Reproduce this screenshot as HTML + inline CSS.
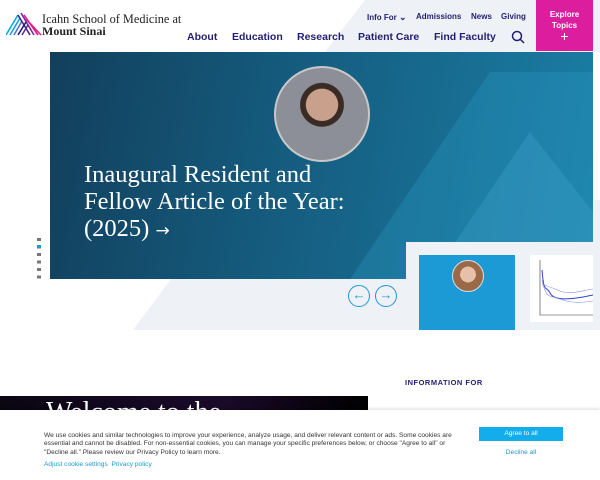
<!DOCTYPE html>
<html><head><meta charset="utf-8"><style>
*{margin:0;padding:0;box-sizing:border-box}
body{width:600px;height:480px;overflow:hidden;background:#fff;font-family:"Liberation Sans",sans-serif;position:relative}
.a{position:absolute}
.nav{color:#221f72;font-weight:bold;font-size:10.5px}
.top{color:#221f72;font-size:8px;font-weight:bold}
</style></head><body>
<svg class="a" style="left:0;top:0" width="600" height="340">
<polygon points="365,0 600,0 600,52 325,52" fill="#eef1f5"/>
<polygon points="133,330 600,330 600,200 230,200" fill="#eef1f5"/>
</svg>
<svg class="a" style="left:6;top:12" width="36" height="24" viewBox="0 0 36 24">
<g stroke-width="1.6" fill="none">
<path d="M0,23 L12,3" stroke="#06a9e0"/><path d="M4,23 L14,6" stroke="#1aa0e0"/><path d="M8,23 L16,9" stroke="#5a70d0"/>
<path d="M12,3 L24,23" stroke="#3b2c8a"/><path d="M15,1 L28,23" stroke="#7a2a9a"/><path d="M18,3 L32,23" stroke="#d6248f"/><path d="M20,7 L35,23" stroke="#e0218a"/>
<path d="M12,23 L20,10" stroke="#221f72"/><path d="M16,23 L22,13" stroke="#6a2a9a"/>
</g></svg>
<div class="a" style="left:42px;top:13px;font-family:'Liberation Serif',serif;font-size:12.3px;color:#222;line-height:12px">Icahn School of Medicine at<br><b style="font-size:12px">Mount Sinai</b></div>
<div class="a top" style="left:367px;top:12px">Info For <span style="font-size:9px">&#8964;</span></div>
<div class="a top" style="left:416px;top:12px">Admissions</div>
<div class="a top" style="left:471px;top:12px">News</div>
<div class="a top" style="left:501px;top:12px">Giving</div>
<div class="a nav" style="left:187px;top:31px">About</div>
<div class="a nav" style="left:232px;top:31px">Education</div>
<div class="a nav" style="left:297px;top:31px">Research</div>
<div class="a nav" style="left:358px;top:31px">Patient Care</div>
<div class="a nav" style="left:434px;top:31px">Find Faculty</div>
<svg class="a" style="left:511px;top:30px" width="14" height="14"><circle cx="6" cy="6" r="4.5" stroke="#221f72" stroke-width="1.5" fill="none"/><path d="M9.5,9.5 L13,13" stroke="#221f72" stroke-width="1.5"/></svg>
<div class="a" style="left:536px;top:0;width:57px;height:51px;background:#dc1e9e;color:#fff;font-size:8px;font-weight:bold;text-align:center;padding-top:9px;line-height:11px">Explore<br>Topics<br><span style="font-size:14px;font-weight:normal">+</span></div>
<div class="a" style="left:50px;top:52px;width:543px;height:227px;background:linear-gradient(100deg,#123f5c 0%,#155d80 45%,#1b7fa6 100%)"></div>
<svg class="a" style="left:50px;top:52px" width="543" height="227"><polygon points="300,227 440,20 543,20 543,227" fill="#2a9cc8" opacity=".3"/><polygon points="380,227 480,80 543,160 543,227" fill="#4bb0d8" opacity=".25"/></svg>
<div class="a" style="left:406px;top:242px;width:194px;height:88px;background:#eef1f5"></div>
<div class="a" style="left:274px;top:66px;width:96px;height:96px;border-radius:50%;background:radial-gradient(circle at 50% 40%,#c9a08c 0 22%,#3a2b24 23% 30%,#8c8f97 31%);border:2px solid #c8c8c8"></div>
<div class="a" style="left:84px;top:161px;color:#fff;font-family:'Liberation Serif',serif;font-size:24.5px;line-height:27px">Inaugural Resident and<br>Fellow Article of the Year:<br>(2025) <span style="font-family:'DejaVu Sans';font-size:17px">→</span></div>
<div class="a" style="left:37px;top:238px;width:4px;height:42px;background:repeating-linear-gradient(#777 0 3px,transparent 3px 7.5px)"></div>
<div class="a" style="left:37px;top:245px;width:4px;height:3px;background:#1a9ad6"></div>
<div class="a" style="left:348px;top:285px;width:22px;height:22px;border:1.5px solid #1a9ad6;border-radius:50%;color:#1a9ad6;font-size:13px;text-align:center;line-height:18px">←</div>
<div class="a" style="left:375px;top:285px;width:22px;height:22px;border:1.5px solid #1a9ad6;border-radius:50%;color:#1a9ad6;font-size:13px;text-align:center;line-height:18px">→</div>
<div class="a" style="left:419px;top:255px;width:96px;height:75px;background:#1b9ad6"></div>
<div class="a" style="left:452px;top:260px;width:32px;height:32px;border-radius:50%;background:radial-gradient(circle at 50% 45%,#e6c0a8 0 35%,#9a6a48 36%);border:1.5px solid #ddd"></div>
<div class="a" style="left:530px;top:255px;width:63px;height:67px;background:#fff"></div>
<svg class="a" style="left:530px;top:255px" width="63" height="67"><path d="M10,5 V60 H63" stroke="#333" stroke-width=".6" fill="none"/><path d="M12,15 C14,40 16,30 20,38 S40,45 63,40" stroke="#3040d0" fill="none"/><path d="M12,25 C16,45 20,40 30,44 S50,48 63,46" stroke="#8090e0" fill="none" stroke-width=".6"/><path d="M12,30 C16,30 20,32 30,36 S50,36 63,34" stroke="#8090e0" fill="none" stroke-width=".6"/></svg>
<div class="a" style="left:405px;top:378px;color:#221f72;font-size:7.5px;font-weight:bold;letter-spacing:.5px">INFORMATION FOR</div>
<div class="a" style="left:0;top:396px;width:368px;height:14px;background:linear-gradient(90deg,#0a0612,#1a0a2a 60%,#000)"></div>
<div class="a" style="left:46px;top:398px;color:#fff;font-family:'Liberation Serif',serif;font-size:28px;line-height:30px;height:12px;overflow:hidden">Welcome to the</div>
<div class="a" style="left:0;top:410px;width:600px;height:70px;background:#fff;box-shadow:0 -1px 3px rgba(0,0,0,.15)"></div>
<div class="a" style="left:44px;top:432px;width:415px;font-size:6.6px;line-height:8.3px;color:#333">We use cookies and similar technologies to improve your experience, analyze usage, and deliver relevant content or ads. Some cookies are essential and cannot be disabled. For non-essential cookies, you can manage your specific preferences below, or choose "Agree to all" or "Decline all." Please review our Privacy Policy to learn more.</div>
<div class="a" style="left:44px;top:461px;font-size:6.6px;color:#1a9ad6">Adjust cookie settings &nbsp;Privacy policy</div>
<div class="a" style="left:479px;top:427px;width:84px;height:14px;background:#12adea;color:#fff;font-size:6.6px;text-align:center;line-height:14px">Agree to all</div>
<div class="a" style="left:479px;top:449px;width:84px;color:#1a9ad6;font-size:6.6px;text-align:center">Decline all</div>
</body></html>
